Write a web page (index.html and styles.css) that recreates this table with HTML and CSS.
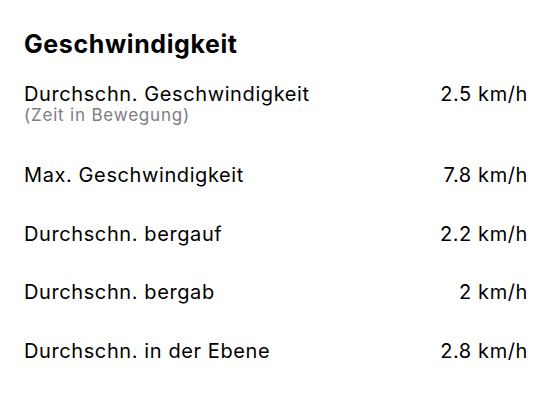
FILE: index.html
```html
<!DOCTYPE html>
<html lang="de">
<head>
<meta charset="utf-8">
<link rel="stylesheet" href="styles.css">
</head>
<body>
<section class="panel">
  <h2 class="title">Geschwindigkeit</h2>
  <ul class="list">
    <li class="row">
      <div class="label">
        <div class="name">Durchschn. Geschwindigkeit</div>
        <div class="sub">(Zeit in Bewegung)</div>
      </div>
      <div class="value">2.5 km/h</div>
    </li>
    <li class="row">
      <div class="label"><div class="name">Max. Geschwindigkeit</div></div>
      <div class="value">7.8 km/h</div>
    </li>
    <li class="row">
      <div class="label"><div class="name">Durchschn. bergauf</div></div>
      <div class="value">2.2 km/h</div>
    </li>
    <li class="row">
      <div class="label"><div class="name">Durchschn. bergab</div></div>
      <div class="value">2 km/h</div>
    </li>
    <li class="row">
      <div class="label"><div class="name">Durchschn. in der Ebene</div></div>
      <div class="value">2.8 km/h</div>
    </li>
  </ul>
</section>
</body>
</html>
```
FILE: styles.css
```css
html, body {
  margin: 0;
  padding: 0;
  background: #ffffff;
}
body {
  font-family: Inter, "Noto Sans", "Liberation Sans", sans-serif;
  color: #000000;
  width: 552px;
  height: 400px;
  overflow: hidden;
}
.panel {
  padding: 29px 24px 0 24px;
}
.title {
  margin: 0 0 6px 0;
  font-size: 25px;
  line-height: 30px;
  font-weight: 700;
  letter-spacing: 0.6px;
}
.list {
  list-style: none;
  margin: 0;
  padding: 0;
}
.row {
  display: flex;
  justify-content: space-between;
  align-items: baseline;
  padding: 17.33px 0;
}
.name {
  font-size: 20px;
  line-height: 24px;
  letter-spacing: 0.6px;
}
.sub {
  font-size: 17px;
  line-height: 18px;
  letter-spacing: 0.8px;
  color: #7d7d82;
  margin-bottom: 4px;
}
.value {
  font-size: 20px;
  line-height: 24px;
  letter-spacing: 0.6px;
}
```
